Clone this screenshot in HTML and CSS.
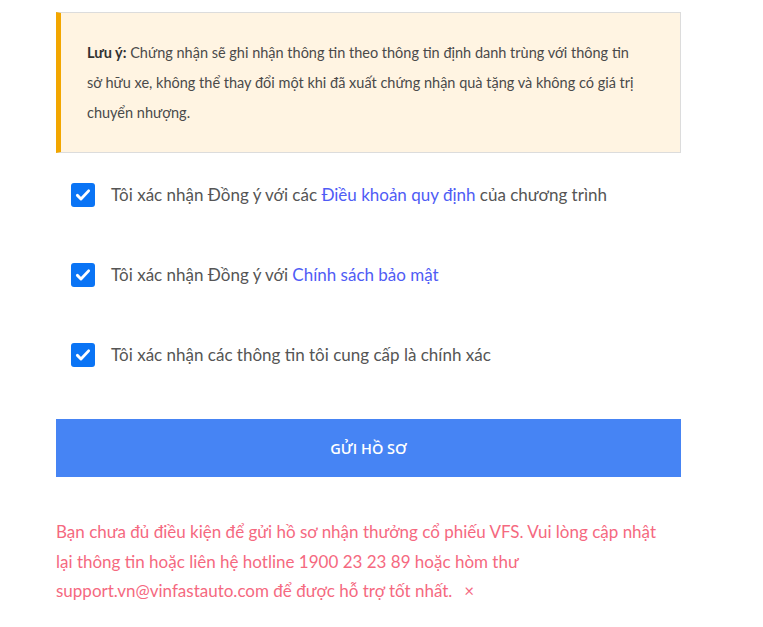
FILE: index.html
```html
<!DOCTYPE html>
<html lang="vi">
<head>
<meta charset="utf-8">
<link rel="stylesheet" href="styles.css">
</head>
<body>
<div class="wrap">
  <div class="note">
    <p><b>Lưu ý:</b> Chứng nhận sẽ ghi nhận thông tin theo thông tin định danh trùng với thông tin sở hữu xe, không thể thay đổi một khi đã xuất chứng nhận quà tặng và không có giá trị chuyển nhượng.</p>
  </div>
  <div class="checks">
    <label class="check"><span class="box"><svg viewBox="0 0 24 24" width="18" height="18"><path d="M4.5 12.5l4.8 4.8L19.5 6.5" fill="none" stroke="#fff" stroke-width="3.8" stroke-linecap="round" stroke-linejoin="round"/></svg></span><span>Tôi xác nhận Đồng ý với các <a class="link">Điều khoản quy định</a> của chương trình</span></label>
    <label class="check"><span class="box"><svg viewBox="0 0 24 24" width="18" height="18"><path d="M4.5 12.5l4.8 4.8L19.5 6.5" fill="none" stroke="#fff" stroke-width="3.8" stroke-linecap="round" stroke-linejoin="round"/></svg></span><span>Tôi xác nhận Đồng ý với <a class="link">Chính sách bảo mật</a></span></label>
    <label class="check"><span class="box"><svg viewBox="0 0 24 24" width="18" height="18"><path d="M4.5 12.5l4.8 4.8L19.5 6.5" fill="none" stroke="#fff" stroke-width="3.8" stroke-linecap="round" stroke-linejoin="round"/></svg></span><span>Tôi xác nhận các thông tin tôi cung cấp là chính xác</span></label>
  </div>
  <button class="submit">GỬI HỒ SƠ</button>
  <p class="error">Bạn chưa đủ điều kiện để gửi hồ sơ nhận thưởng cổ phiếu VFS. Vui lòng cập nhật lại thông tin hoặc liên hệ hotline 1900 23 23 89 hoặc hòm thư support.vn@vinfastauto.com để được hỗ trợ tốt nhất.<span class="close">×</span></p>
</div>
</body>
</html>
```

FILE: styles.css
```css
html, body {
  margin: 0;
  padding: 0;
  background: #fff;
}
body {
  font-family: "Lato", "Noto Sans", sans-serif;
  color: #555;
}
.wrap {
  width: 625px;
  margin-left: 56px;
  padding-top: 12px;
}
.note {
  background: #fff4e2;
  border: 1px solid #dcdcdc;
  border-left: 5px solid #f2a600;
  padding: 25px 36px 23px 26px;
  height: 141px;
  box-sizing: border-box;
}
.note p {
  margin: 0;
  font-size: 14.5px;
  line-height: 30px;
  color: #4a4a4a;
}
.note b {
  color: #333;
  font-weight: 700;
}
.checks {
  display: flex;
  flex-direction: column;
  gap: 56px;
  padding: 30px 0 0 15px;
}
.check {
  display: flex;
  align-items: center;
  gap: 16px;
  font-size: 17px;
  line-height: 24px;
  color: #555;
}
.box {
  width: 24px;
  height: 24px;
  border-radius: 3px;
  background: #0a74f5;
  display: flex;
  align-items: center;
  justify-content: center;
  flex: none;
}
.link {
  color: #4f5cf5;
}
.submit {
  display: block;
  width: 625px;
  height: 58px;
  margin-top: 52px;
  border: none;
  background: #4684f4;
  color: #fff;
  font-family: "Open Sans", sans-serif;
  font-weight: 600;
  font-size: 14.5px;
  padding: 0;
}
.error {
  margin: 40px 0 0 0;
  font-size: 17px;
  line-height: 29.5px;
  color: #f5697f;
  padding-right: 10px;
}
.close {
  font-size: 17px;
  margin-left: 12px;
  color: #f5697f;
}
```
